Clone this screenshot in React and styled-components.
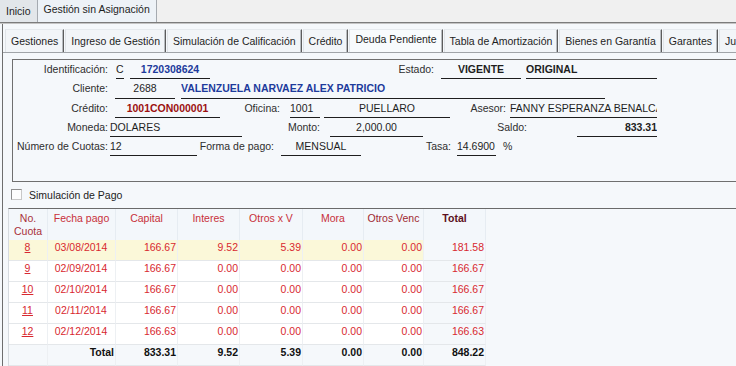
import styled, {createGlobalStyle} from "styled-components";

const GlobalStyle = createGlobalStyle`
  body {
    margin: 0;
    background: #f5f8fb;
    font-family: "Liberation Sans", Arial, sans-serif;
    font-size: 10.5px;
    color: #2a2a2a;
    overflow: hidden;
  }
`

const Page = styled.div`
  width: 736px;
  height: 366px;
  overflow: hidden;
`
const TopBar = styled.div`
  display: flex;
  height: 22px;
  background: #f0f0f0;
  border-bottom: 1px solid #7c7c7c;
  box-shadow: 0 1px 0 #c4c4c4;
`
const TopTab = styled.div`
  padding: 0 6px;
  line-height: ${p => p.$active ? "19px" : "22px"};
  background: ${p => p.$active ? "#edf2f7" : "#e2e6ea"};
  border-left: ${p => p.$active ? "1px solid #a5aab0" : "none"};
  border-right: ${p => p.$active ? "1px solid #a5aab0" : "none"};
  color: #1e1e1e;
`
const Frame = styled.div`
  margin: 1px 0 0 2px;
  border-left: 1px solid #6e6e6e;
  height: 343px;
`
const TabStrip = styled.div`
  display: flex;
  height: 29px;
  padding: 5px 0 0 2px;
  box-sizing: border-box;
  border-bottom: 1px solid #a0a4a8;
`
const Tab = styled.div`
  padding: 0 5px;
  margin-right: 1px;
  line-height: ${p => p.$active ? "19px" : "22px"};
  white-space: nowrap;
  background: ${p => p.$active ? "#f8fbfd" : "#f2f5f8"};
  border-left: 1px solid #e0e4e8;
  border-top: 1px solid #e6eaee;
  border-right: 1px solid #5c5c5c;
  box-shadow: inset -1px 0 #b8bcc0;
  color: #1e1e1e;
`
const Body = styled.div`
  padding: 6px 0 0 9px;
`
const Box = styled.div`
  width: 800px;
  height: 123px;
  box-sizing: border-box;
  border: 1px solid #6f6f6f;
`
const FieldRow = styled.div`
  display: flex;
  height: 19.3px;
`
const Label = styled.div`
  width: ${p => p.$w}px;
  flex: none;
  text-align: right;
  line-height: 18px;
  white-space: nowrap;
  color: #2e2e2e;
`
const Value = styled.div`
  width: ${p => p.$w}px;
  margin-left: ${p => p.$ml}px;
  flex: none;
  box-sizing: border-box;
  border-bottom: 1px solid #1e1e1e;
  line-height: 18px;
  text-align: ${p => p.$align || "left"};
  font-weight: ${p => p.$bold ? "bold" : "normal"};
  color: ${p => p.$tone === "blue" ? "#1d3b9c" : p.$tone === "red" ? "#9c1010" : "#1e1e1e"};
  white-space: nowrap;
  overflow: hidden;
`
const Unit = styled.div`
  margin-left: 7px;
  line-height: 18px;
`
const CheckRow = styled.div`
  display: flex;
  align-items: center;
  height: 11px;
  margin: 7px 0 8px -1px;
`
const CheckBox = styled.div`
  width: 11px;
  height: 11px;
  box-sizing: border-box;
  border: 1px solid #8e8e8e;
  border-right-color: #c8c8c8;
  border-bottom-color: #c8c8c8;
  background: #fdfdfd;
`
const CheckLabel = styled.span`
  margin-left: 7px;
  color: #222;
`
const TableArea = styled.div`
  margin-left: -4px;
  border-top: 1px solid #6a6a6a;
  border-left: 1px solid #d6dbe0;
  height: 160px;
`
const Grid = styled.div`
  display: grid;
  grid-template-columns: 39px 68px 62px 62px 63px 61px 60px 62px;
  grid-template-rows: 31px;
  grid-auto-rows: 21px;
  width: 477px;
`
const HeadCell = styled.div`
  box-sizing: border-box;
  padding-top: 3px;
  line-height: 13px;
  text-align: center;
  background: #f3f7fb;
  border-right: 1px solid #e6ecf2;
  color: ${p => p.$color || "#c8303a"};
  font-weight: ${p => p.$bold ? "bold" : "normal"};
`
const Cell = styled.div`
  box-sizing: border-box;
  padding-right: 1px;
  line-height: 14px;
  text-align: ${p => p.$align || "right"};
  background: ${p => p.$bg || "#ffffff"};
  border-right: 1px solid #edf0f3;
  border-bottom: 1px solid #e4e7ea;
  color: ${p => p.$strong ? "#111" : "#d8282f"};
  font-weight: ${p => p.$strong ? "bold" : "normal"};
  text-decoration: ${p => p.$link ? "underline" : "none"};
`

const rows = [
    ["8", "03/08/2014", "166.67", "9.52", "5.39", "0.00", "0.00", "181.58"],
    ["9", "02/09/2014", "166.67", "0.00", "0.00", "0.00", "0.00", "166.67"],
    ["10", "02/10/2014", "166.67", "0.00", "0.00", "0.00", "0.00", "166.67"],
    ["11", "02/11/2014", "166.67", "0.00", "0.00", "0.00", "0.00", "166.67"],
    ["12", "02/12/2014", "166.63", "0.00", "0.00", "0.00", "0.00", "166.63"],
]

const tabs = ["Gestiones", "Ingreso de Gestión", "Simulación de Calificación", "Crédito",
    "Deuda Pendiente", "Tabla de Amortización", "Bienes en Garantía", "Garantes", "Juicio"]

const App = () => {
    return (
        <Page>
            <GlobalStyle/>
            <TopBar>
                <TopTab>Inicio</TopTab>
                <TopTab $active>Gestión sin Asignación</TopTab>
            </TopBar>
            <Frame>
                <TabStrip>
                    {tabs.map(t => <Tab key={t} $active={t === "Deuda Pendiente"}>{t}</Tab>)}
                </TabStrip>
                <Body>
                    <Box>
                        <FieldRow>
                            <Label $w={95}>Identificación:</Label>
                            <Value $ml={8} $w={8}>C</Value>
                            <Value $ml={6} $w={80} $align="center" $bold $tone="blue">1720308624</Value>
                            <Label $w={224}>Estado:</Label>
                            <Value $ml={7} $w={80} $align="center" $bold>VIGENTE</Value>
                            <Value $ml={5} $w={131} $bold>ORIGINAL</Value>
                        </FieldRow>
                        <FieldRow>
                            <Label $w={95}>Cliente:</Label>
                            <Value $ml={7} $w={60} $align="center">2688</Value>
                            <Value $ml={6} $w={424} $bold $tone="blue">VALENZUELA NARVAEZ ALEX PATRICIO</Value>
                        </FieldRow>
                        <FieldRow>
                            <Label $w={95}>Crédito:</Label>
                            <Value $ml={7} $w={105} $align="center" $bold $tone="red">1001CON000001</Value>
                            <Label $w={60}>Oficina:</Label>
                            <Value $ml={10} $w={30}>1001</Value>
                            <Value $ml={4} $w={126} $align="center">PUELLARO</Value>
                            <Label $w={56}>Asesor:</Label>
                            <Value $ml={4} $w={147}>FANNY ESPERANZA BENALCAZAR</Value>
                        </FieldRow>
                        <FieldRow>
                            <Label $w={95}>Moneda:</Label>
                            <Value $ml={2} $w={132}>DOLARES</Value>
                            <Label $w={78}>Monto:</Label>
                            <Value $ml={10} $w={93} $align="center">2,000.00</Value>
                            <Label $w={104}>Saldo:</Label>
                            <Value $ml={50} $w={80} $align="right" $bold>833.31</Value>
                        </FieldRow>
                        <FieldRow>
                            <Label $w={95}>Número de Cuotas:</Label>
                            <Value $ml={2} $w={87}>12</Value>
                            <Label $w={77}>Forma de pago:</Label>
                            <Value $ml={7} $w={80} $align="center">MENSUAL</Value>
                            <Label $w={90}>Tasa:</Label>
                            <Value $ml={6} $w={39}>14.6900</Value>
                            <Unit>%</Unit>
                        </FieldRow>
                    </Box>
                    <CheckRow>
                        <CheckBox/>
                        <CheckLabel>Simulación de Pago</CheckLabel>
                    </CheckRow>
                    <TableArea>
                        <Grid>
                            <HeadCell $color="#a8303a">No.<br/>Cuota</HeadCell>
                            <HeadCell>Fecha pago</HeadCell>
                            <HeadCell>Capital</HeadCell>
                            <HeadCell>Interes</HeadCell>
                            <HeadCell>Otros x V</HeadCell>
                            <HeadCell>Mora</HeadCell>
                            <HeadCell $color="#a02830">Otros Venc</HeadCell>
                            <HeadCell $color="#5c1020" $bold>Total</HeadCell>
                            {rows.map((r, i) => {
                                const bg = i === 0 ? "#fbf8d9" : "#ffffff"
                                return r.map((v, j) => (
                                    <Cell key={i + "-" + j}
                                          $align={j < 2 ? "center" : "right"}
                                          $link={j === 0}
                                          $bg={j === 7 ? "#f5f8fb" : bg}>
                                        {v}
                                    </Cell>
                                ))
                            })}
                            <Cell $bg="#f5f8fb"/>
                            <Cell $bg="#f5f8fb" $strong>Total</Cell>
                            <Cell $bg="#f5f8fb" $strong>833.31</Cell>
                            <Cell $bg="#f5f8fb" $strong>9.52</Cell>
                            <Cell $bg="#f5f8fb" $strong>5.39</Cell>
                            <Cell $bg="#f5f8fb" $strong>0.00</Cell>
                            <Cell $bg="#f5f8fb" $strong>0.00</Cell>
                            <Cell $bg="#f5f8fb" $strong>848.22</Cell>
                        </Grid>
                    </TableArea>
                </Body>
            </Frame>
        </Page>
    )
}

export default App
